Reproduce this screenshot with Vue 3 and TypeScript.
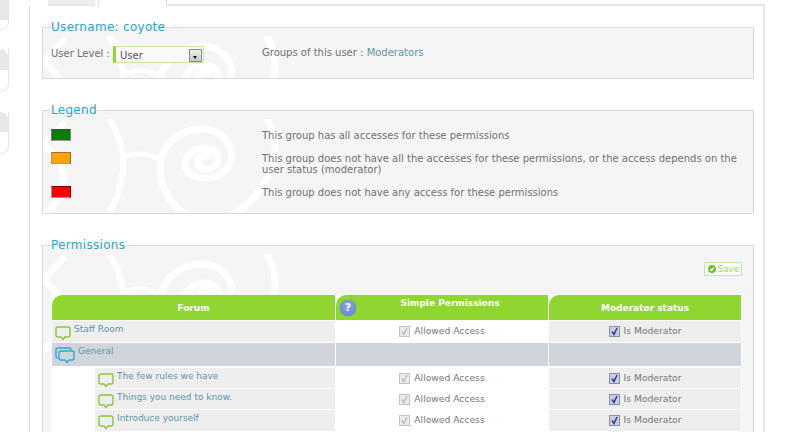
<script setup lang="ts">
interface Row {
  name: string
  kind: 'top' | 'cat' | 'sub'
}
const rows: Row[] = [
  { name: 'Staff Room', kind: 'top' },
  { name: 'General', kind: 'cat' },
  { name: 'The few rules we have', kind: 'sub' },
  { name: 'Things you need to know.', kind: 'sub' },
  { name: 'Introduce yourself', kind: 'sub' },
]
const stubs = ['one', 'two', 'three']
</script>

<template>
  <div class="page">
    <svg class="defs" width="0" height="0" aria-hidden="true">
      <symbol id="spiral" viewBox="0 0 260 110">
        <g fill="none" stroke="#fff" stroke-linecap="round">
          <path stroke-width="7" d="M166 37C160 34 153 39 155 45C157 52 168 52 173 45C178 37 172 28 160 29C148 30 140 40 143 49C147 60 168 63 180 53C193 42 191 24 175 14C155 4 125 14 118 40C113 65 130 95 155 100C185 105 215 85 228 50C236 30 232 15 223 -2" />
          <path stroke-width="6" d="M65 -2C78 18 82 35 80 52C78 72 70 90 58 108" />
          <path stroke-width="5" d="M80 38Q100 31 116 40" />
          <path stroke-width="7" d="M-2 24C12 34 22 48 20 62C18 78 10 90 -2 98" />
          <path stroke-width="6" d="M-2 28L20 5" />
        </g>
      </symbol>
      <symbol id="bubble" viewBox="0 0 16 15">
        <path fill="none" stroke="currentColor" stroke-width="1.4" d="M3 1H13Q15 1 15 3V9Q15 11 13 11H10L8 13.5L6 11H3Q1 11 1 9V3Q1 1 3 1Z" />
      </symbol>
      <symbol id="bubbles" viewBox="0 0 20 17">
        <path fill="none" stroke="currentColor" stroke-width="1.4" d="M3 1H14Q16 1 16 3M3 11Q1 11 1 9V3Q1 1 3 1" />
        <path fill="#d0d5dc" stroke="currentColor" stroke-width="1.4" d="M6 4H17Q19 4 19 6V11Q19 13 17 13H14L12 15.5L10 13H6Q4 13 4 11V6Q4 4 6 4Z" />
      </symbol>
      <symbol id="check" viewBox="0 0 11 11">
        <path fill="none" stroke="currentColor" stroke-width="1.4" d="M3 5.5L5 8.5L8 2" />
      </symbol>
    </svg>

    <aside class="stubs">
      <div v-for="s in stubs" :key="s" class="stub" :class="s"><div class="stub-head"></div></div>
    </aside>

    <div class="main">
      <nav class="tabs">
        <span class="tab-off"></span>
        <span class="tab-on"></span>
        <span class="tab-rest"></span>
      </nav>

      <section class="panel">
        <fieldset class="box user">
          <svg class="spiral"><use href="#spiral" width="260" height="110" /></svg>
          <legend>Username: coyote</legend>
          <div class="user-row">
            <label class="level">User Level :</label>
            <div class="select">
              <span>User</span>
              <span class="arrow"></span>
            </div>
            <p class="groups">Groups of this user : <a>Moderators</a></p>
          </div>
        </fieldset>

        <fieldset class="box legend-box">
          <svg class="spiral"><use href="#spiral" width="260" height="110" /></svg>
          <legend>Legend</legend>
          <div class="legend-grid">
            <span class="swatch green"></span>
            <p>This group has all accesses for these permissions</p>
            <span class="swatch orange"></span>
            <p>This group does not have all the accesses for these permissions, or the access depends on the user status (moderator)</p>
            <span class="swatch red"></span>
            <p>This group does not have any access for these permissions</p>
          </div>
        </fieldset>

        <fieldset class="box perms">
          <svg class="spiral"><use href="#spiral" width="260" height="110" /></svg>
          <legend>Permissions</legend>
          <div class="save-row">
            <button class="save" type="button">
              <svg width="8" height="8" viewBox="0 0 8 8">
                <circle cx="4" cy="4" r="4" fill="#6cc02a" />
                <path d="M2 4L3.5 5.5L6 2.5" fill="none" stroke="#fff" stroke-width="1.2" />
              </svg>
              Save
            </button>
          </div>
          <table class="grid">
            <colgroup>
              <col class="c1" /><col class="c2" /><col class="c3" />
            </colgroup>
            <thead>
              <tr>
                <th>Forum</th>
                <th class="simple">
                  <span class="help">?</span>
                  Simple Permissions
                </th>
                <th class="mod-head">Moderator status</th>
              </tr>
            </thead>
            <tbody>
              <tr v-for="r in rows" :key="r.name" :class="r.kind">
                <td class="forum">
                  <div class="forum-in">
                    <svg class="ic" :class="{ multi: r.kind === 'cat' }">
                      <use :href="r.kind === 'cat' ? '#bubbles' : '#bubble'" />
                    </svg>
                    <a>{{ r.name }}</a>
                  </div>
                </td>
                <td class="c-simple">
                  <span v-if="r.kind !== 'cat'" class="opt">
                    <span class="cb off"><svg width="11" height="11"><use href="#check" /></svg></span>
                    Allowed Access
                  </span>
                </td>
                <td class="c-mod">
                  <span v-if="r.kind !== 'cat'" class="opt">
                    <span class="cb on"><svg width="11" height="11"><use href="#check" /></svg></span>
                    Is Moderator
                  </span>
                </td>
              </tr>
            </tbody>
          </table>
        </fieldset>
      </section>
    </div>
  </div>
</template>

<style scoped>
.page {
  width: 800px;
  height: 432px;
  overflow: hidden;
  display: flex;
  background: #fff;
  font-family: "DejaVu Sans", Verdana, sans-serif;
  font-size: 10px;
  color: #707070;
}
.defs { position: absolute; }
.stubs {
  width: 29px;
  flex: none;
  display: flex;
  flex-direction: column;
}
.stub {
  width: 9px;
  box-sizing: border-box;
  border: solid #e6e6e6;
  border-width: 0 1px 1px 0;
  border-radius: 0 0 8px 0;
}
.stub-head { background: #e8e8e8; }
.stub.one { height: 30px; margin-bottom: 19px; }
.stub.one .stub-head { height: 20px; }
.stub.two { height: 43px; margin-bottom: 20px; }
.stub.two .stub-head { height: 21px; border-radius: 0 8px 0 0; }
.stub.three { height: 42px; }
.stub.three .stub-head { height: 20px; border-radius: 0 8px 0 0; }

.main { width: 736px; flex: none; }
.tabs { display: flex; height: 6px; }
.tab-off {
  width: 47px;
  margin-left: 19px;
  height: 4px;
  background: #eeeeee;
  box-shadow: 0 2px 0 #e8e8e8;
}
.tab-on {
  width: 67px;
  margin-left: 3px;
  border-left: 1px solid #ddd;
  border-right: 1px solid #ddd;
}
.tab-rest { flex: 1; border-bottom: 2px solid #e8e8e8; }

.panel {
  height: 426px;
  box-sizing: border-box;
  border-left: 1px solid #d8d8d8;
  border-right: 2px solid #e8e8e8;
  padding: 12px 9px 0 12px;
}
.box {
  margin: 0 0 22px;
  padding: 0 8px;
  border: 1px solid #d9d9d9;
  background: #f5f5f5;
  position: relative;
  isolation: isolate;
  min-width: 0;
}
.box legend {
  padding: 0;
  font-size: 12px;
  line-height: 18px;
  letter-spacing: 0.3px;
  color: #2aa3cf;
}
.spiral {
  position: absolute;
  inset: 0;
  width: 100%;
  height: 100%;
  z-index: -1;
}
.user { padding-bottom: 15px; }
.user-row {
  display: flex;
  align-items: center;
  padding-top: 10px;
  height: 17px;
}
.level { width: 62px; flex: none; margin-bottom: 3px; }
.select {
  width: 91px;
  height: 17px;
  box-sizing: border-box;
  flex: none;
  display: flex;
  align-items: center;
  justify-content: space-between;
  border: 1px solid #c2e8a0;
  border-left: 3px solid #8fd631;
  background: #fafafa;
  padding: 1px 1px 0 4px;
  font-size: 10px;
  color: #555;
}
.arrow {
  width: 13px;
  height: 13px;
  box-sizing: border-box;
  border: 1px solid #8a8a8a;
  background: linear-gradient(#f0f0f0, #c8c8c8);
  position: relative;
}
.arrow::after {
  content: "";
  position: absolute;
  left: 3px;
  top: 6px;
  border: 2.5px solid transparent;
  border-top: 3px solid #111;
  border-bottom: 0;
}
.groups { margin: 0 0 5px 58px; }
.groups a { color: #5c95ab; }

.legend-box { padding-bottom: 15px; }
.legend-grid {
  display: grid;
  grid-template-columns: 20px 475px;
  column-gap: 191px;
  row-gap: 11px;
  padding-top: 10px;
  align-items: start;
}
.legend-grid p {
  margin: 1px 0 0;
  line-height: 11px;
}
.swatch {
  width: 20px;
  height: 12px;
  box-sizing: border-box;
  border: 1px solid;
  border-color: #444 #888 #999 #777;
}
.green { background: #008000; }
.orange { background: #ffa500; border-color: #a5702a #8a6a40 #999 #999; }
.red { background: #ff0000; border-color: #800 #800 #999 #999; }

.perms { margin-bottom: 0; padding-right: 11px; }
.save-row {
  display: flex;
  justify-content: flex-end;
  padding-top: 8px;
  margin-bottom: 18px;
}
.save {
  width: 38px;
  height: 14px;
  box-sizing: border-box;
  padding: 0 0 0 3px;
  display: flex;
  align-items: center;
  gap: 2px;
  border: 1px solid #c4eaa0;
  background: #fbfbfb;
  color: #9cd667;
  font: 8.5px "DejaVu Sans", Verdana, sans-serif;
}
.grid {
  width: 691px;
  table-layout: fixed;
  border-collapse: separate;
  border-spacing: 1px;
  background: #fff;
  font-size: 9.2px;
}
.c1 { width: 283px; }
.c2 { width: 212px; }
.c3 { width: 192px; }
th {
  height: 25px;
  box-sizing: border-box;
  padding: 0;
  background: #8fd631;
  color: #fff;
  font-size: 9px;
  font-weight: 700;
  text-align: center;
  border-top-left-radius: 10px;
}
th.simple {
  position: relative;
  vertical-align: top;
  padding: 3px 0 0 16px;
}
.help {
  position: absolute;
  left: 4px;
  top: 5px;
  width: 16px;
  height: 16px;
  padding: 0;
  border-radius: 50%;
  background: radial-gradient(circle at 50% 35%, #8ea6ee, #5f78d8);
  box-shadow: 0 0 1px #4a5fae;
  font-size: 11px;
  line-height: 16px;
  font-weight: 700;
}
td { padding: 0; height: 21px; box-sizing: border-box; background: #eee; }
.forum { vertical-align: top; }
.forum-in {
  display: flex;
  align-items: flex-start;
  height: 100%;
  padding: 3px 0 0 3px;
  box-sizing: border-box;
}
.forum a { color: #5d96ab; font-size: 9px; }
.ic { width: 16px; height: 15px; margin: 2px 3px 0 0; color: #8cc63f; flex: none; }
.ic.multi { width: 20px; height: 17px; color: #2aa8d8; margin: 1px 3px 0 0; }
.c-simple { background: #fff; text-align: center; }
.c-mod { background: #eee; text-align: center; }
.opt { display: inline-flex; align-items: center; gap: 4px; color: #777; }
.cb { width: 11px; height: 11px; box-sizing: border-box; display: block; position: relative; top: 1px; }
.cb svg { display: block; margin: -1px; }
.cb.off { border: 1px solid #c4c4c4; background: #eaeaea; color: #bdbdbd; }
.cb.on { border: 1px solid #8b91a3; background: #c9cedd; color: #27358f; }

tr.cat td { height: 23px; background: #d0d5dc; }
tr.sub .forum { background: #fff; }
tr.sub .forum-in { margin-left: 43px; background: #eee; height: 20px; }
tr.sub .ic { margin-top: 2px; margin-right: 3px; }
tr.sub td { height: 20px; }
tr.cat + tr td { border-top: 1px solid #fff; height: 21px; }
tr.sub + tr.sub + tr.sub td { height: 21px; }
tr.sub + tr.sub + tr.sub .forum-in { height: 21px; }
tr.sub + tr.sub + tr.sub + tr.sub td { height: 20px; }
tr.sub + tr.sub + tr.sub + tr.sub .forum-in { height: 20px; }
</style>
